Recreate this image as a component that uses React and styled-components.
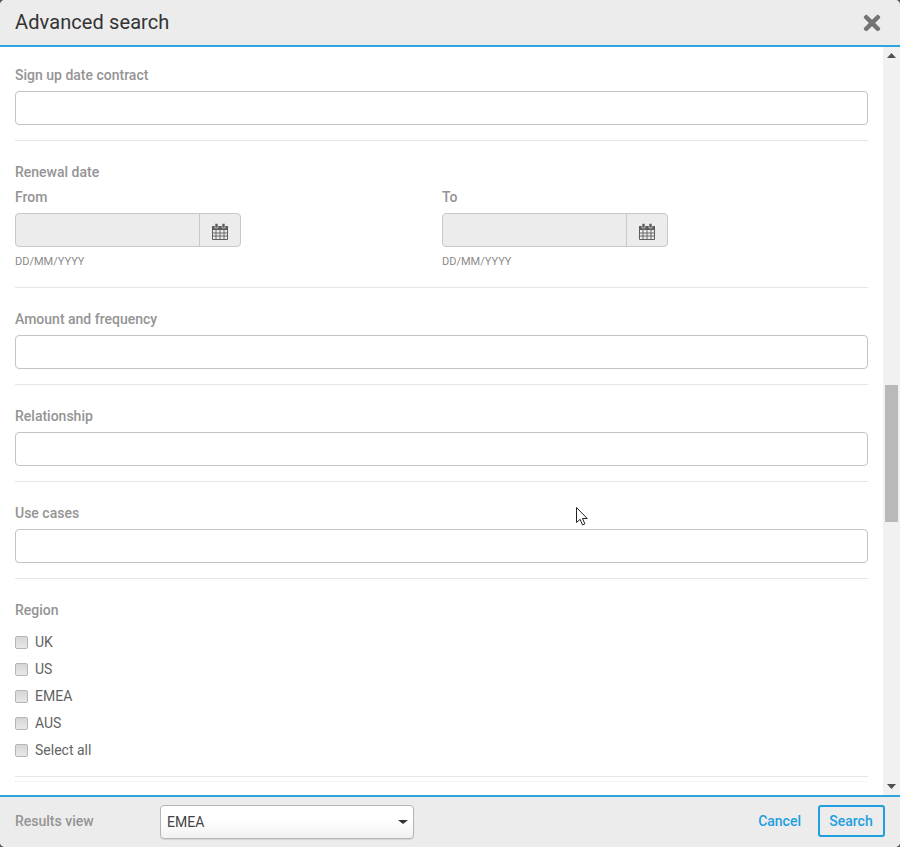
import React from "react";
import styled, { createGlobalStyle } from "styled-components";
import { FaTimes } from "react-icons/fa";

const Global = createGlobalStyle`
  html, body { margin: 0; padding: 0; background: #555; }
  body { font-family: Roboto, "Liberation Sans", sans-serif; }
`;

const Modal = styled.div`
  position: relative;
  width: 900px;
  height: 847px;
  display: flex;
  flex-direction: column;
  background: #fff;
  border-radius: 5px;
  overflow: hidden;
`;
const Header = styled.header`
  height: 43px;
  flex: none;
  display: flex;
  align-items: center;
  justify-content: space-between;
  padding: 0 16px 2px 15px;
  background: #ececec;
  border-bottom: 2px solid #2ea6dd;
`;
const Title = styled.h1`
  margin: 0;
  font-size: 20px;
  font-weight: 400;
  color: #333;
  letter-spacing: 0.1px;
`;
const Close = styled.button`
  display: flex;
  padding: 0;
  margin-top: 3px;
  border: 0;
  background: none;
  color: #737373;
  font-size: 24px;
`;
const Middle = styled.div`
  flex: 1;
  min-height: 0;
  display: flex;
`;
const Content = styled.main`
  flex: 1;
  padding: 18px 15px 0;
  overflow: hidden;
`;
const Section = styled.section`
  padding-bottom: ${(p) => p.$pb ?? 15}px;
  border-bottom: 1px solid #e6e6e6;
  margin-bottom: ${(p) => p.$mb ?? 21}px;
`;
const Label = styled.div`
  height: 20px;
  line-height: 20px;
  font-size: 14px;
  font-weight: 500;
  color: #949494;
  margin-bottom: ${(p) => p.$mb ?? 6}px;
`;
const TextInput = styled.input`
  display: block;
  box-sizing: border-box;
  width: 100%;
  height: 34px;
  padding: 0 8px;
  background: #fff;
  border: 1px solid #c4c4c4;
  border-radius: 4px;
  outline: none;
`;
const DateCols = styled.div`
  display: grid;
  grid-template-columns: 427px 1fr;
`;
const DateGroup = styled.div`
  display: flex;
  box-sizing: border-box;
  width: 226px;
  height: 34px;
  background: #ececec;
  border: 1px solid #c8c8c8;
  border-radius: 4px;
  overflow: hidden;
`;
const DateField = styled.div`
  flex: 1;
`;
const DateAddon = styled.div`
  width: 40px;
  display: flex;
  align-items: center;
  justify-content: center;
  border-left: 1px solid #c8c8c8;
  color: #5c5c5c;
`;
const CalendarSvg = styled.svg`
  margin-top: 2px;
`;
const Hint = styled.div`
  height: 14px;
  line-height: 14px;
  margin-top: 8px;
  font-size: 11px;
  color: #8a8a8a;
`;
const CheckList = styled.div`
  display: flex;
  flex-direction: column;
  padding-top: 2px;
`;
const CheckRow = styled.label`
  height: 27px;
  display: flex;
  align-items: center;
  gap: 7px;
  font-size: 14px;
  color: #636363;
`;
const CheckBox = styled.span`
  box-sizing: border-box;
  width: 13px;
  height: 13px;
  margin-top: 1px;
  border: 1px solid #b5b5b5;
  border-radius: 2px;
  background: linear-gradient(#d6d6d6, #e8e8e8);
`;
const FaintLine = styled.div`
  height: 1px;
  background: #f5f5f5;
`;
const Track = styled.aside`
  width: 17px;
  flex: none;
  display: flex;
  flex-direction: column;
  align-items: center;
  background: #f1f1f1;
`;
const ArrowBox = styled.div`
  height: 17px;
  flex: none;
  display: flex;
  align-items: center;
  justify-content: center;
`;
const Thumb = styled.div`
  width: 13px;
  height: 137px;
  flex: none;
  margin-top: 321px;
  background: #b9b9b9;
`;
const TrackFill = styled.div`
  flex: 1;
`;
const Footer = styled.footer`
  box-sizing: border-box;
  height: 52px;
  flex: none;
  display: flex;
  align-items: center;
  padding: 0 15px 2px 15px;
  background: #ececec;
  border-top: 2px solid #2ea6dd;
`;
const FooterLabel = styled.div`
  width: 145px;
  font-size: 14px;
  font-weight: 500;
  color: #949494;
`;
const SelectBox = styled.div`
  box-sizing: border-box;
  width: 254px;
  height: 34px;
  display: flex;
  align-items: center;
  justify-content: space-between;
  padding: 0 5px 0 6px;
  background: linear-gradient(#fff 45%, #f1f1f1);
  border: 1px solid #b5b5b5;
  border-radius: 4px;
  box-shadow: 0 1px 1px rgba(0, 0, 0, 0.1);
  font-size: 14px;
  color: #444;
  margin-top: 2px;
`;
const Caret = styled.span`
  width: 0;
  height: 0;
  border-left: 5px solid transparent;
  border-right: 5px solid transparent;
  border-top: 4px solid #333;
`;
const Actions = styled.div`
  margin-left: auto;
  display: flex;
  align-items: center;
  gap: 17px;
`;
const LinkButton = styled.button`
  padding: 0;
  border: 0;
  background: none;
  font: 500 14px Roboto, sans-serif;
  color: #1d9fe0;
`;
const SearchButton = styled.button`
  box-sizing: border-box;
  width: 67px;
  height: 32px;
  padding: 0 1px 0 0;
  background: none;
  border: 2px solid #1d9fe0;
  border-radius: 3px;
  font: 500 14px Roboto, sans-serif;
  color: #1d9fe0;
`;
const Cursor = styled.svg`
  position: absolute;
  left: 575px;
  top: 506px;
`;

const CalendarIcon = () => (
  <CalendarSvg width="16" height="17" viewBox="0 0 16 17" aria-hidden="true">
    <path d="M.5 3.5h15v13H.5z" fill="none" stroke="currentColor" />
    <path d="M0 3h16V7H0z" fill="currentColor" />
    <path d="M3 0.5h3v4.5H3zM10 0.5h3v4.5h-3z" fill="currentColor" stroke="#ececec" strokeWidth=".6" />
    <path d="M4 7v9M8 7v9M12 7v9M1 10h14M1 13h14" stroke="currentColor" strokeWidth=".9" fill="none" />
  </CalendarSvg>
);

const DateColumn = ({ label }) => (
  <div>
    <Label>{label}</Label>
    <DateGroup>
      <DateField />
      <DateAddon>
        <CalendarIcon />
      </DateAddon>
    </DateGroup>
    <Hint>DD/MM/YYYY</Hint>
  </div>
);

const Field = ({ label }) => (
  <Section>
    <Label>{label}</Label>
    <TextInput />
  </Section>
);

const regions = ["UK", "US", "EMEA", "AUS", "Select all"];

export default function App() {
  return (
    <Modal>
      <Global />
      <Header>
        <Title>Advanced search</Title>
        <Close aria-label="Close">
          <FaTimes />
        </Close>
      </Header>
      <Middle>
        <Content>
          <Field label="Sign up date contract" />
          <Section $pb={18}>
            <Label $mb={5}>Renewal date</Label>
            <DateCols>
              <DateColumn label="From" />
              <DateColumn label="To" />
            </DateCols>
          </Section>
          <Field label="Amount and frequency" />
          <Field label="Relationship" />
          <Field label="Use cases" />
          <Section $pb={13} $mb={4}>
            <Label>Region</Label>
            <CheckList>
              {regions.map((r) => (
                <CheckRow key={r}>
                  <CheckBox />
                  {r}
                </CheckRow>
              ))}
            </CheckList>
          </Section>
          <FaintLine />
        </Content>
        <Track>
          <ArrowBox>
            <svg width="9" height="5" viewBox="0 0 9 5"><path d="M4.5 0L9 5H0z" fill="#505050" /></svg>
          </ArrowBox>
          <Thumb />
          <TrackFill />
          <ArrowBox>
            <svg width="9" height="5" viewBox="0 0 9 5"><path d="M0 0h9L4.5 5z" fill="#505050" /></svg>
          </ArrowBox>
        </Track>
      </Middle>
      <Footer>
        <FooterLabel>Results view</FooterLabel>
        <SelectBox>
          EMEA
          <Caret />
        </SelectBox>
        <Actions>
          <LinkButton>Cancel</LinkButton>
          <SearchButton>Search</SearchButton>
        </Actions>
      </Footer>
      <Cursor width="14" height="21" viewBox="0 0 14 21" aria-hidden="true">
        <path d="M1.5 1.5v15l3.6-3.2 2.4 5.6 2.4-1-2.4-5.4h4.7z" fill="#fff" stroke="#222" strokeWidth="1" />
      </Cursor>
    </Modal>
  );
}
